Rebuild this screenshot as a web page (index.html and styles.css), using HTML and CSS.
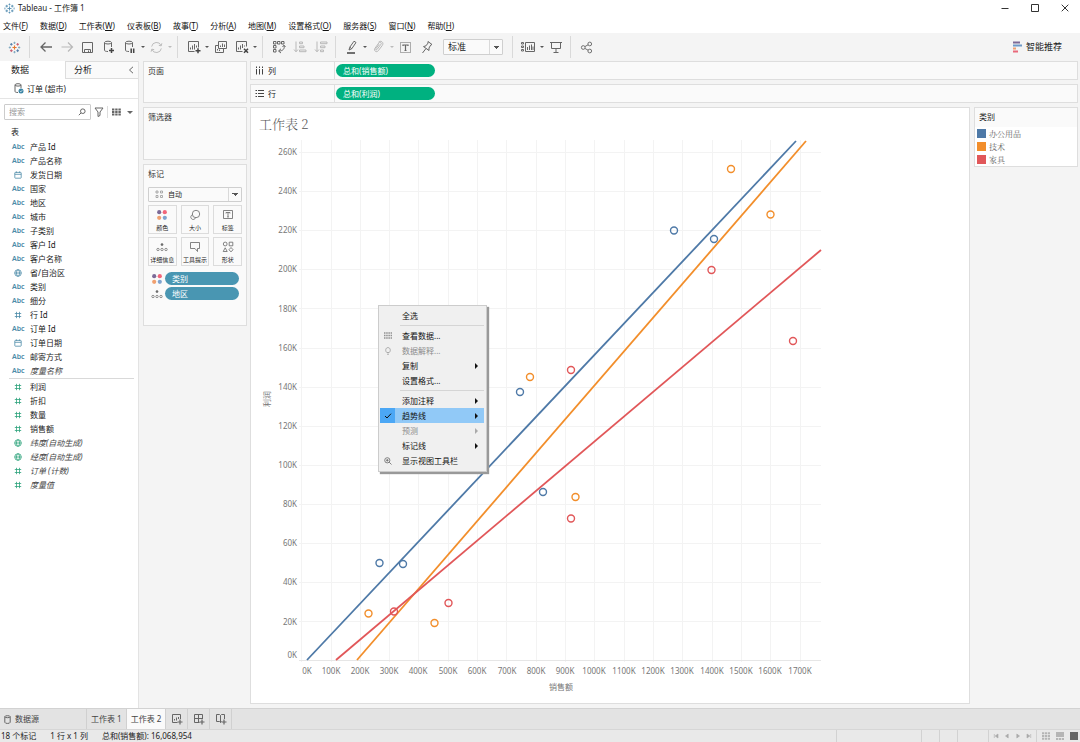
FILE: index.html
```html
<!DOCTYPE html>
<html lang="zh-CN">
<head>
<meta charset="utf-8">
<title>Tableau - 工作簿 1</title>
<link rel="stylesheet" href="styles.css">
</head>
<body>
<svg class="defs" aria-hidden="true">
  <defs>
    <symbol id="i-hash" viewBox="0 0 8 8"><path d="M2.500 .8v6.400M5.500 .8v6.400M.8 2.500h6.400M.8 5.500h6.400"/></symbol>
    <symbol id="i-globe" viewBox="0 0 8 8"><circle cx="4" cy="4" r="3.3"/><ellipse cx="4" cy="4" rx="1.5" ry="3.3"/><path d="M.7 4h6.6"/></symbol>
    <symbol id="i-date" viewBox="0 0 8 8"><rect x=".8" y="1.4" width="6.4" height="5.8" rx=".6"/><path d="M.8 3.3h6.4M2.4.4v1.4M5.6.4v1.4"/></symbol>
    <symbol id="i-colors" viewBox="0 0 12 12"><circle cx="3.2" cy="3.2" r="2.1" fill="#7c6a97"/><circle cx="8.8" cy="3.2" r="2.1" fill="#f2667a"/><circle cx="3.2" cy="8.8" r="2.1" fill="#f0a070"/><circle cx="8.8" cy="8.8" r="2.1" fill="#7fa3cf"/></symbol>
    <symbol id="i-detail" viewBox="0 0 12 12"><circle cx="6" cy="3.6" r="1" fill="#666"/><circle cx="2" cy="8.500" r="1.200"/><circle cx="6" cy="8.500" r="1.200"/><circle cx="10" cy="8.500" r="1.200"/></symbol>
    <symbol id="i-logo" viewBox="0 0 14 14"><path class="c-orange" d="M7 4.8v4.4M4.8 7h4.4"/><path class="c-red" d="M3.6 8.9v3M2.1 10.4h3M10.4 2.2v2.8M9 3.6h2.8"/><path class="c-blue" d="M10.4 8.9v3M9 10.4h2.8M3.6 2.2v2.8M2.2 3.6H5"/><path class="c-sky" d="M7 .8v2.4M5.8 2h2.4M7 10.8v2.4M5.8 12h2.4M2 5.8v2.4M.8 7h2.4M12 5.8v2.4M10.8 7h2.4"/></symbol>
    <symbol id="i-logo-small" viewBox="0 0 12 12"><path d="M6 3.8v4.4M3.8 6h4.4M3 7.2V10M1.6 8.6h2.8M9 2v2.8M7.6 3.4h2.8M9 7.2V10M7.6 8.6h2.8M3 2v2.8M1.6 3.4h2.8M6 .6v2M5 1.6h2M6 9.4v2M5 10.4h2M1 5v2M11 5v2"/></symbol>
  </defs>
</svg>

<div class="app">
  <header class="titlebar">
    <svg class="titlebar__logo" width="11" height="11"><use href="#i-logo-small"/></svg>
    <span class="titlebar__text">Tableau - 工作簿 1</span>
    <div class="window-buttons">
      <button aria-label="最小化"><svg width="8" height="8" viewBox="0 0 8 8"><path d="M.5 4.5h7"/></svg></button>
      <button aria-label="最大化"><svg width="8" height="8" viewBox="0 0 8 8"><path d="M.5.5h7v7h-7z"/></svg></button>
      <button aria-label="关闭"><svg width="8" height="8" viewBox="0 0 8 8"><path d="M.7.7l6.600 6.600M7.300.7L.7 7.300"/></svg></button>
    </div>
  </header>

  <nav class="menubar">
    <button>文件(<u>F</u>)</button><button>数据(<u>D</u>)</button><button>工作表(<u>W</u>)</button><button>仪表板(<u>B</u>)</button><button>故事(<u>T</u>)</button><button>分析(<u>A</u>)</button><button>地图(<u>M</u>)</button><button>设置格式(<u>O</u>)</button><button>服务器(<u>S</u>)</button><button>窗口(<u>N</u>)</button><button>帮助(<u>H</u>)</button>
  </nav>

  <div class="toolbar">
    <button class="tool" aria-label="起始页"><svg width="13" height="13"><use href="#i-logo"/></svg></button>
    <span class="toolbar__sep"></span>
    <button class="tool" aria-label="撤销"><svg width="14" height="14" viewBox="0 0 14 14"><path d="M13 7H2M6.5 2.5L2 7l4.500 4.500" stroke-width="1.300"/></svg></button>
    <button class="tool tool--off" aria-label="重做"><svg width="14" height="14" viewBox="0 0 14 14"><path d="M1.500 7h11M8 2.500L12.500 7 8 11.500" stroke-width="1.200"/></svg></button>
    <button class="tool" aria-label="保存"><svg width="13" height="13" viewBox="0 0 13 13"><path d="M1.500 1.500h10v10h-10zM3.500 11.500v-3h6v3M7.500 9.500v1.500"/></svg></button>
    <button class="tool" aria-label="新建数据源"><svg width="14" height="14" viewBox="0 0 14 14"><path d="M6 11.500c-2.200 0-3.500-.5-3.500-1.200V2.800M9.500 2.800V7"/><ellipse cx="6" cy="2.600" rx="3.500" ry="1.400"/><path class="strong" d="M9.500 8v5M7 10.500h5"/></svg></button>
    <button class="tool" aria-label="暂停自动更新"><svg width="14" height="14" viewBox="0 0 14 14"><path d="M6 11.500c-2.200 0-3.500-.5-3.500-1.200V2.800M9.500 2.800V7"/><ellipse cx="6" cy="2.600" rx="3.500" ry="1.400"/><path class="strong" d="M8.200 8.500v4.500M10.700 8.500v4.500"/></svg></button>
    <button class="caret" aria-label="更新选项"></button>
    <button class="tool tool--off" aria-label="运行更新"><svg width="13" height="13" viewBox="0 0 14 14"><path d="M1.800 6A5.300 5.300 0 0 1 12 5M12.200 8A5.300 5.300 0 0 1 2 9M12.800 2.500L12 5.200 9.500 4.700M1.200 11.500L2 8.800l2.500.5"/></svg></button>
    <button class="caret caret--off" aria-label="运行选项"></button>
    <span class="toolbar__sep"></span>
    <button class="tool" aria-label="新建工作表"><svg width="14" height="14" viewBox="0 0 14 14"><path d="M7.500 11.500H1.500v-10h10v6M3.500 9.500V7.500M5.500 9.500V5.500M7.500 9.500V4M9.500 7.500V5.500"/><path class="strong" d="M11 8.200v5M8.500 10.700h5"/></svg></button>
    <button class="caret" aria-label="新建选项"></button>
    <button class="tool" aria-label="复制工作表"><svg width="14" height="14" viewBox="0 0 14 14"><path d="M4.500 1.500h8v7h-8zM4.500 5.500h-3v7h8v-4M6.500 7V5.500M8.500 7V3.500M10.500 7V4.500M3.500 10.500V9M5.500 11v-1.500"/></svg></button>
    <button class="tool" aria-label="清除工作表"><svg width="14" height="14" viewBox="0 0 14 14"><path d="M7.500 11.500H1.500v-10h10v5M3.500 9.500V7.500M5.500 9.500V5.500M7.500 8V4M9.500 6.500V5.500"/><path class="strong" d="M9 8.700l4 4M13 8.700l-4 4"/></svg></button>
    <button class="caret" aria-label="清除选项"></button>
    <span class="toolbar__sep"></span>
    <button class="tool" aria-label="交换行和列"><svg width="14" height="14" viewBox="0 0 14 14"><path d="M1.500 1.500H4V4H1.500zM5.500 1.500H8V4H5.500zM9.500 1.500H12V4H9.500zM1.500 5.500H4V8H1.500zM1.500 9.500H4V12H1.500zM12 5.500c1 3-1 5.500-5 5.500M9 8.800L6.500 11 9 13M10.500 7L12 5.200 13.500 7"/></svg></button>
    <button class="tool tool--off" aria-label="升序排序"><svg width="14" height="14" viewBox="0 0 14 14"><path d="M3 1.500v10M1 9.500l2 2.300 2-2.300M6.500 2h3v1.700h-3zM6.500 6h4.500v1.700H6.500zM6.500 10h6.500v1.700H6.500z"/></svg></button>
    <button class="tool tool--off" aria-label="降序排序"><svg width="14" height="14" viewBox="0 0 14 14"><path d="M3 1.500v10M1 9.500l2 2.300 2-2.300M6.500 2H13v1.700H6.500zM6.500 6H11v1.700H6.500zM6.500 10h3v1.700h-3z"/></svg></button>
    <span class="toolbar__sep"></span>
    <button class="tool" aria-label="突出显示"><svg width="14" height="14" viewBox="0 0 14 14"><path d="M4 10l.8-2.800L9 1.200l2 1.300-4.200 6.200zM4.800 7.200l2 1.500"/><path class="strong" d="M2 13h8"/></svg></button>
    <button class="caret" aria-label="突出显示选项"></button>
    <button class="tool tool--off" aria-label="组成员"><svg width="14" height="14" viewBox="0 0 14 14"><path d="M5 9.500l4-5.300c1-1.300-1-2.800-2-1.500L3 8.200c-1.700 2.500 1.500 4.800 3.300 2.500l4-5.300c2-3-1.500-5.500-3.800-3.200M5 9.500C4.200 10.300 3.200 9.500 3.900 8.600l3.300-4.400"/></svg></button>
    <button class="caret caret--off" aria-label="组选项"></button>
    <button class="tool" aria-label="显示标记标签"><svg width="13" height="13" viewBox="0 0 13 13"><path d="M1.500 1.500h10v10h-10z" stroke-dasharray="1 1"/><path d="M4 5V4h5v1M6.500 4v5.500M5.500 9.500h2" stroke-width="1.200"/></svg></button>
    <button class="tool" aria-label="固定轴"><svg width="14" height="14" viewBox="0 0 14 14"><path d="M8 1.500l4 3-1.300.6L9 8v2.500L3.500 6.600 6 5.800l2-2.700zM6 8.500L2.500 13"/></svg></button>
    <select class="fit-select" aria-label="适合方式"><option>标准</option></select>
    <span class="toolbar__sep"></span>
    <button class="tool" aria-label="显示卡"><svg width="15" height="14" viewBox="0 0 15 14"><path d="M.5 2.500h2v1.500h-2zM.5 6h2v1.500h-2zM.5 9.500h2V11h-2zM4.500 2.500h9v9h-9zM6.500 10V7M8.500 10V5.500M10.500 10V4.500M12 10V6.500"/></svg></button>
    <button class="caret" aria-label="显示卡选项"></button>
    <button class="tool" aria-label="演示模式"><svg width="14" height="14" viewBox="0 0 14 14"><path d="M1 2.500h12M2.500 2.500v6h9v-6M7 8.500V12M4.500 12.500h5"/></svg></button>
    <span class="toolbar__sep"></span>
    <button class="tool" aria-label="共享"><svg width="13" height="13" viewBox="0 0 14 14"><circle cx="3.500" cy="7" r="2"/><circle cx="10.500" cy="3.200" r="2"/><circle cx="10.500" cy="10.800" r="2"/><path d="M5.300 6l3.400-1.900M5.300 8l3.400 1.900"/></svg></button>
    <button class="showme"><svg width="10" height="12" viewBox="0 0 10 12"><path d="M1 1.500h7" stroke="#7c6a97"/><path d="M1 4.500h9" stroke="#6f9ac8"/><path d="M1 7.500h3" stroke="#f0a070"/><path d="M1 10.500h5" stroke="#e9687a"/></svg>智能推荐</button>
  </div>

  <div class="workspace">
    <aside class="data-pane">
      <div class="pane-tabs">
        <button class="pane-tab pane-tab--active">数据</button>
        <button class="pane-tab">分析<svg width="6" height="8" viewBox="0 0 6 8"><path d="M5 .8L1.500 4 5 7.200"/></svg></button>
      </div>
      <div class="source">
        <svg width="10" height="11" viewBox="0 0 10 11"><path d="M4 9.500c-2 0-3-.4-3-1.100V2M7 2v3"/><ellipse cx="4" cy="1.900" rx="3" ry="1.200"/><circle cx="7" cy="8" r="2.500" fill="#3b85a5" stroke="none"/><path d="M5.900 8l.9.900 1.500-1.700" stroke="#fff" stroke-width=".7"/></svg>
        订单 (超市)
      </div>
      <div class="search-row">
        <label class="search">
          <input type="search" placeholder="搜索" aria-label="搜索">
          <svg width="8" height="8" viewBox="0 0 8 8"><circle cx="4.800" cy="3.200" r="2.300"/><path d="M3 5L.8 7.200"/></svg>
        </label>
        <button aria-label="筛选"><svg width="10" height="10" viewBox="0 0 10 10"><path d="M1 1h8L6 5v3.500L4 9.500V5z"/></svg></button>
        <button class="view-as" aria-label="查看方式"><svg width="9" height="8" viewBox="0 0 9 8"><path d="M0 1.500h9M0 4h9M0 6.500h9" stroke-width="1.800" stroke-dasharray="2.400 .8"/></svg><i class="tri"></i></button>
      </div>
      <h2 class="fields-title">表</h2>
      <ul class="fields fields--dim">
        <li><b>Abc</b>产品 Id</li>
        <li><b>Abc</b>产品名称</li>
        <li><svg><use href="#i-date"/></svg>发货日期</li>
        <li><b>Abc</b>国家</li>
        <li><b>Abc</b>地区</li>
        <li><b>Abc</b>城市</li>
        <li><b>Abc</b>子类别</li>
        <li><b>Abc</b>客户 Id</li>
        <li><b>Abc</b>客户名称</li>
        <li><svg><use href="#i-globe"/></svg>省/自治区</li>
        <li><b>Abc</b>类别</li>
        <li><b>Abc</b>细分</li>
        <li><svg><use href="#i-hash"/></svg>行 Id</li>
        <li><b>Abc</b>订单 Id</li>
        <li><svg><use href="#i-date"/></svg>订单日期</li>
        <li><b>Abc</b>邮寄方式</li>
        <li><b>Abc</b><em>度量名称</em></li>
      </ul>
      <ul class="fields fields--measure">
        <li><svg><use href="#i-hash"/></svg>利润</li>
        <li><svg><use href="#i-hash"/></svg>折扣</li>
        <li><svg><use href="#i-hash"/></svg>数量</li>
        <li><svg><use href="#i-hash"/></svg>销售额</li>
        <li><svg><use href="#i-globe"/></svg><em>纬度(自动生成)</em></li>
        <li><svg><use href="#i-globe"/></svg><em>经度(自动生成)</em></li>
        <li><svg><use href="#i-hash"/></svg><em>订单 (计数)</em></li>
        <li><svg><use href="#i-hash"/></svg><em>度量值</em></li>
      </ul>
    </aside>

    <div class="cards">
      <section class="card card--pages"><h3>页面</h3></section>
      <section class="card card--filters"><h3>筛选器</h3></section>
      <section class="card card--marks">
        <h3>标记</h3>
        <div class="mark-type">
          <svg width="9" height="9" viewBox="0 0 9 9"><path d="M1 1h2v2H1zM5.500 1h2v2h-2zM1 5.500h2v2H1zM5.500 5.500h2v2h-2z" stroke-width=".8"/></svg>
          <select aria-label="标记类型"><option>自动</option></select>
        </div>
        <div class="mark-grid">
          <button><svg><use href="#i-colors"/></svg>颜色</button>
          <button><svg viewBox="0 0 12 12"><circle cx="7" cy="5" r="3.700"/><path d="M3.400 5.800a2.400 2.400 0 1 0 3.100 3"/></svg>大小</button>
          <button><svg viewBox="0 0 12 12"><path d="M1.500 1.500h9v8h-9zM4 4.500V3.500h4v1M6 3.500V8M5.200 8h1.600"/></svg>标签</button>
          <button><svg><use href="#i-detail"/></svg>详细信息</button>
          <button><svg viewBox="0 0 12 12"><path d="M1.500 1.500h9v6H8.500v3L6 7.500H1.500z"/></svg>工具提示</button>
          <button><svg viewBox="0 0 12 12"><circle cx="3.200" cy="3" r="1.900"/><path d="M7.200 1.200h3.600v3.600H7.200zM3.200 6.800l2 3.700h-4zM9 6.500l2 2.200-2 2.200-2-2.200z"/></svg>形状</button>
        </div>
        <div class="mark-row"><svg><use href="#i-colors"/></svg><button class="pill pill--blue">类别</button></div>
        <div class="mark-row"><svg><use href="#i-detail"/></svg><button class="pill pill--blue">地区</button></div>
      </section>
    </div>

    <main class="canvas">
      <div class="shelf">
        <div class="shelf__name"><svg width="9" height="9" viewBox="0 0 9 9"><path d="M1.500 3v5.500M4.500 3v5.500M7.500 3v5.500M1.500.5v1.500M4.500.5v1.500M7.500.5v1.500"/></svg>列</div>
        <button class="pill pill--green">总和(销售额)</button>
      </div>
      <div class="shelf">
        <div class="shelf__name"><svg width="9" height="9" viewBox="0 0 9 9"><path d="M3 1.500h6M3 4.500h6M3 7.500h6M.5 1.500H2M.5 4.500H2M.5 7.500H2"/></svg>行</div>
        <button class="pill pill--green">总和(利润)</button>
      </div>
      <div class="view-row">
        <section class="sheet">
          <h1>工作表 2</h1>
          <svg class="chart" viewBox="251 137 718 560" role="img" aria-label="销售额与利润散点图">
            <path class="grid" d="M301.500 140v522M331.500 140v522M360.500 140v522M389.500 140v522M418.500 140v522M448.500 140v522M477.500 140v522M506.500 140v522M536.500 140v522M565.500 140v522M594.500 140v522M624.500 140v522M653.500 140v522M682.500 140v522M712.500 140v522M741.500 140v522M770.500 140v522M800.500 140v522"/>
            <path class="grid" d="M299 152.500h522M299 191.500h522M299 230.500h522M299 269.500h522M299 308.500h522M299 348.500h522M299 387.500h522M299 426.500h522M299 465.500h522M299 504.500h522M299 543.500h522M299 582.500h522M299 621.500h522"/>
            <path class="axis" d="M299 660.500h522"/>
            <g class="ticks ticks--y">
              <text x="297" y="155">260K</text><text x="297" y="194">240K</text><text x="297" y="233">220K</text><text x="297" y="272">200K</text><text x="297" y="312">180K</text><text x="297" y="351">160K</text><text x="297" y="390">140K</text><text x="297" y="429">120K</text><text x="297" y="468">100K</text><text x="297" y="507">80K</text><text x="297" y="546">60K</text><text x="297" y="585">40K</text><text x="297" y="625">20K</text><text x="297" y="658">0K</text>
            </g>
            <g class="ticks ticks--x">
              <text x="307" y="674">0K</text><text x="331" y="674">100K</text><text x="360" y="674">200K</text><text x="389" y="674">300K</text><text x="418" y="674">400K</text><text x="448" y="674">500K</text><text x="477" y="674">600K</text><text x="507" y="674">700K</text><text x="536" y="674">800K</text><text x="565" y="674">900K</text><text x="594" y="674">1000K</text><text x="624" y="674">1100K</text><text x="653" y="674">1200K</text><text x="682" y="674">1300K</text><text x="712" y="674">1400K</text><text x="741" y="674">1500K</text><text x="770" y="674">1600K</text><text x="800" y="674">1700K</text>
              <text x="561" y="690">销售额</text>
              <text transform="translate(270 399) rotate(-90)">利润</text>
            </g>
            <g class="series series--blue">
              <path d="M307 660L796 141"/>
              <circle cx="674" cy="230.500" r="3.500"/><circle cx="714" cy="239" r="3.500"/><circle cx="520" cy="392" r="3.500"/><circle cx="543" cy="492" r="3.500"/><circle cx="379.500" cy="563" r="3.500"/><circle cx="403" cy="564" r="3.500"/>
            </g>
            <g class="series series--orange">
              <path d="M357 660L806 141"/>
              <circle cx="731" cy="169" r="3.500"/><circle cx="770.500" cy="214.500" r="3.500"/><circle cx="530" cy="377" r="3.500"/><circle cx="575.500" cy="497" r="3.500"/><circle cx="368.500" cy="613.500" r="3.500"/><circle cx="434.500" cy="623" r="3.500"/>
            </g>
            <g class="series series--red">
              <path d="M336 660L821 250"/>
              <circle cx="711.500" cy="270" r="3.500"/><circle cx="793" cy="341" r="3.500"/><circle cx="571" cy="370" r="3.500"/><circle cx="571" cy="518.500" r="3.500"/><circle cx="448.500" cy="603" r="3.500"/><circle cx="394" cy="611.500" r="3.500"/>
            </g>
          </svg>
          <div class="context-menu" role="menu">
            <button role="menuitem">全选</button>
            <hr>
            <button role="menuitem"><svg viewBox="0 0 8 8"><path d="M0 1h8M0 3.500h8M0 6h8" stroke-width="1.500" stroke-dasharray="1.500 .7" opacity=".7"/></svg>查看数据...</button>
            <button role="menuitem" disabled><svg viewBox="0 0 8 8"><path d="M2.800 5.500C1 4 1.500.6 4 .6S7 4 5.200 5.500zM3 7.200h2"/></svg>数据解释...</button>
            <button role="menuitem" class="has-sub">复制</button>
            <button role="menuitem">设置格式...</button>
            <hr>
            <button role="menuitem" class="has-sub">添加注释</button>
            <button role="menuitem" class="has-sub is-active"><svg viewBox="0 0 8 8"><path d="M1 4l2 2 4-4.300"/></svg>趋势线</button>
            <button role="menuitem" class="has-sub" disabled>预测</button>
            <button role="menuitem" class="has-sub">标记线</button>
            <button role="menuitem"><svg viewBox="0 0 8 8"><circle cx="3.300" cy="3.300" r="2.600"/><path d="M5.200 5.200l2.300 2.300M2 3.300h2.600M3.300 2v2.600"/></svg>显示视图工具栏</button>
          </div>
        </section>
        <aside class="legend">
          <h3>类别</h3>
          <ul>
            <li><i class="swatch swatch--blue"></i>办公用品</li>
            <li><i class="swatch swatch--orange"></i>技术</li>
            <li><i class="swatch swatch--red"></i>家具</li>
          </ul>
        </aside>
      </div>
    </main>
  </div>

  <nav class="sheet-tabs">
    <button class="sheet-tab sheet-tab--source"><svg width="7" height="9" viewBox="0 0 7 9"><path d="M.8 1.800v5.500c0 1.500 5.400 1.500 5.400 0V1.800"/><ellipse cx="3.500" cy="1.700" rx="2.700" ry="1"/></svg>数据源</button>
    <button class="sheet-tab">工作表 1</button>
    <button class="sheet-tab sheet-tab--active">工作表 2</button>
    <button class="sheet-tab sheet-tab--new" aria-label="新建工作表"><svg width="12" height="12" viewBox="0 0 12 12"><path d="M6.500 9.500h-5v-8h8V6M3.500 7.500V6M5.500 7.500V4.500M7.500 6V4"/><path class="strong" d="M9 6.500v5M6.500 9h5"/></svg></button>
    <button class="sheet-tab sheet-tab--new" aria-label="新建仪表板"><svg width="12" height="12" viewBox="0 0 12 12"><path d="M6.500 9.500h-5v-8h8V6M5.500 1.500v8M1.500 5.500h8"/><path class="strong" d="M9 6.500v5M6.500 9h5"/></svg></button>
    <button class="sheet-tab sheet-tab--new" aria-label="新建故事"><svg width="12" height="12" viewBox="0 0 12 12"><path d="M6.500 8.500L5.500 9.500 4.500 8.500h-3v-7h3l1 1 1-1h3V6M5.500 2.500v7"/><path class="strong" d="M9 6.500v5M6.500 9h5"/></svg></button>
  </nav>

  <footer class="statusbar">
    <span>18 个标记</span><span>1 行 x 1 列</span><span>总和(销售额): 16,068,954</span>
    <div class="status-cells">
      <i class="cell cell--wide"></i><i class="cell"></i><i class="cell"></i><i class="cell cell--mid"></i>
      <div class="pager">
        <button aria-label="第一个"><svg viewBox="0 0 6 6"><path d="M1.300 1v4M5 1v4L2.200 3z"/></svg></button>
        <button aria-label="上一个"><svg viewBox="0 0 6 6"><path d="M4.200 1v4L1.500 3z"/></svg></button>
        <button aria-label="下一个"><svg viewBox="0 0 6 6"><path d="M1.800 1v4l2.700-2z"/></svg></button>
        <button aria-label="最后一个"><svg viewBox="0 0 6 6"><path d="M4.700 1v4M1 1v4l2.800-2z"/></svg></button>
      </div>
      <div class="views">
        <button aria-label="缩略图"><svg viewBox="0 0 8 8"><path d="M0 1.200h8M0 4h8M0 6.800h8" stroke="#b5b5b5" stroke-width="2" stroke-dasharray="2.200 .7"/></svg></button>
        <button aria-label="胶片"><svg viewBox="0 0 8 8"><path d="M0 2.500h8" stroke="#b5b5b5" stroke-width="5"/><path d="M0 7h8" stroke="#b5b5b5" stroke-width="2" stroke-dasharray="2.200 .7"/></svg></button>
        <button aria-label="单个工作表"><svg viewBox="0 0 8 8"><path d="M0 4h8" stroke="#666" stroke-width="8"/></svg></button>
      </div>
    </div>
  </footer>
</div>
</body>
</html>
```
FILE: styles.css
```css
* { box-sizing: border-box; }

body {
  margin: 0;
  font: 8px/12px "Noto Sans", "Noto Sans CJK SC", sans-serif;
  color: #222;
  background: #f4f4f4;
}

h1, h2, h3, ul { margin: 0; padding: 0; font-weight: 400; }
ul { list-style: none; }
button, input, select { font: inherit; color: inherit; }
button { margin: 0; padding: 0; border: 0; background: none; }
svg { display: block; flex: none; fill: none; stroke: #666; stroke-width: 1; }

.defs { position: absolute; width: 0; height: 0; }
.app { min-height: 100vh; display: flex; flex-direction: column; }
.strong { stroke: #444; stroke-width: 1.5; }
.c-orange { stroke: #e8762c; stroke-width: 1.2; }
.c-red { stroke: #c9586b; }
.c-blue { stroke: #4e79a7; }
.c-sky { stroke: #7fa9c0; }
#i-colors circle { stroke: none; }
#i-detail circle { stroke-width: .7; }
#i-logo-small { stroke: #5b93b5; }

/* Title bar and menus */
.titlebar { display: flex; align-items: center; height: 16px; padding-left: 4px; background: #fff; }
.titlebar__text { margin-left: 3px; }
.window-buttons { margin-left: auto; display: flex; }
.window-buttons button { width: 30px; height: 16px; display: grid; place-items: center; }
.window-buttons svg { stroke: #333; }
.menubar { display: flex; gap: 12px; height: 17px; padding: 4px 3px 0; background: #fff; }
.menubar button { height: 12px; line-height: 12px; color: #111; }

/* Toolbar */
.toolbar { display: flex; align-items: center; height: 28px; padding: 0 18px 0 4px; }
.toolbar__sep { width: 1px; height: 22px; margin: 0 5px 0 4px; background: #d9d9d9; }
.tool { width: 21px; height: 22px; display: grid; place-items: center; }
.tool--off svg { stroke: #b8b8b8; }
.caret { width: 6px; height: 22px; display: grid; place-items: center; }
.caret::before { content: ""; border: 2px solid transparent; border-top-color: #555; border-bottom: 0; }
.caret--off::before { border-top-color: #bbb; }
select {
  appearance: none;
  border: 1px solid #cfcfcf;
  border-radius: 1px;
  background:
    linear-gradient(to bottom left, #555 50%, transparent 50%) right 6px center / 3px 3px no-repeat,
    linear-gradient(to bottom right, #555 50%, transparent 50%) right 3px center / 3px 3px no-repeat,
    linear-gradient(#d9d9d9, #d9d9d9) right 12px center / 1px 100% no-repeat,
    #fafafa;
}
.fit-select { width: 60px; height: 16px; margin: 0 5px 0 6px; padding: 0 4px; font-size: 9px; line-height: 12px; }
.showme { display: flex; align-items: center; gap: 4px; margin-left: auto; font-size: 9px; }
.showme svg { stroke-width: 2; }

/* Workspace */
.workspace { flex: 1; display: flex; }
.data-pane { width: 139px; background: #fff; border-right: 1px solid #e3e3e3; }
.pane-tabs { display: flex; font-size: 9px; }
.pane-tab { flex: 1; height: 18px; padding: 0 4px 0 8px; display: flex; align-items: center; justify-content: space-between; border: solid #ddd; border-width: 1px 0 1px 1px; background: #fafafa; }
.pane-tab--active { flex: 0 0 65px; padding-left: 10px; border-color: #fff; background: #fff; }
.source { display: flex; align-items: center; gap: 3px; height: 20px; padding-left: 14px; border-bottom: 1px solid #e5e5e5; }
.search-row { display: flex; align-items: center; gap: 3px; padding: 5px 8px 0 4px; }
.search { width: 87px; height: 16px; padding: 0 4px; display: flex; align-items: center; border: 1px solid #ccc; border-radius: 1px; }
.search input { flex: 1; min-width: 0; padding: 0; border: 0; outline: 0; background: none; }
.search input::placeholder { color: #999; }
.view-as { display: flex; align-items: center; gap: 6px; height: 12px; padding-left: 4px; border-left: 1px solid #ddd; }
.tri { border: 3px solid transparent; border-top-color: #666; border-bottom: 0; }
.fields-title { padding: 6px 0 2px 11px; font-size: 8px; line-height: 12px; }
.fields li { display: flex; align-items: center; height: 14px; padding-left: 12px; }
.fields b { width: 18px; font-size: 7px; font-weight: 600; color: #4c8ba8; }
.fields svg { width: 8px; height: 8px; margin: 0 8px 0 2px; stroke: #4c8ba8; stroke-width: .8; }
.fields em { color: #444; }
.fields--dim { margin-right: 4px; }
.fields--dim::after { content: ""; display: block; margin-left: 9px; border-top: 1px solid #d9d9d9; }
.fields--measure { padding-top: 1px; }
.fields--measure svg { stroke: #2fa37c; }

.cards { width: 111px; padding: 0 3px 0 4px; display: flex; flex-direction: column; gap: 4px; }
.card { padding: 3px 4px 4px; border: 1px solid #dedede; background: #fafafa; }
.card h3 { font-size: 8px; line-height: 12px; color: #333; }
.card--pages { height: 42px; }
.card--filters { height: 53px; }
.card--marks { min-height: 162px; }
.mark-type { position: relative; margin-top: 7px; }
.mark-type svg { position: absolute; left: 7px; top: 3px; stroke: #999; }
.mark-type select { width: 100%; height: 15px; padding: 0 19px; font-size: 7px; line-height: 12px; display: block; }
.mark-grid { display: grid; grid-template-columns: repeat(3, 1fr); gap: 3px 4px; margin: 3px 0 6px; }
.mark-grid button { height: 29px; padding-top: 3px; display: flex; flex-direction: column; align-items: center; gap: 3px; border: 1px solid #dcdcdc; font-size: 6px; line-height: 8px; white-space: nowrap; }
.mark-grid svg, .mark-row svg { width: 12px; height: 12px; stroke-width: .8; }
.mark-row { display: flex; align-items: center; gap: 2px; height: 13px; margin: 0 3px 2px; }
.pill { height: 13px; padding: 0 7px; border-radius: 7px; line-height: 12px; text-align: left; color: #fff; }
.pill--blue { flex: 1; background: #4996b2; }
.pill--green { width: 99px; background: #00b180; }

.canvas { flex: 1; min-width: 0; display: flex; flex-direction: column; gap: 4px; padding: 0 2px 4px 0; }
.shelf { display: flex; align-items: center; height: 19px; border: 1px solid #dedede; background: #fafafa; }
.shelf__name { width: 84px; height: 100%; margin-right: 1px; padding-left: 4px; display: flex; align-items: center; gap: 4px; border-right: 1px solid #dedede; }
.shelf svg { stroke: #444; }
.view-row { flex: 1; display: flex; gap: 4px; align-items: flex-start; }
.sheet { position: relative; flex: 1; min-width: 0; align-self: stretch; border: 1px solid #dedede; background: #fff; }
.sheet h1 { padding: 6px 8px 3px; font: 300 13px/20px "Noto Serif CJK SC", "Noto Sans", "Noto Sans CJK SC", serif; color: #555; }
.chart { width: 100%; height: auto; }
.grid { stroke: #f3f3f3; }
.axis { stroke: #e6e6e6; }
.ticks { fill: #777; stroke: none; font-size: 8px; }
.ticks--y { text-anchor: end; }
.ticks--x { text-anchor: middle; }
.series { stroke-width: 1.4; }
.series path { stroke-width: 1.8; }
.series--blue { stroke: #4e79a7; }
.series--orange { stroke: #f28e2b; }
.series--red { stroke: #e15759; }

.legend { width: 104px; border: 1px solid #dedede; background: #fff; }
.legend h3 { padding: 3px 4px 4px; font-size: 8px; line-height: 12px; background: #fafafa; }
.legend li { display: flex; align-items: center; gap: 3px; height: 13px; padding-left: 2px; font-family: "Noto Serif CJK SC", "Noto Sans CJK SC", serif; color: #666; }
.swatch { width: 9px; height: 9px; }
.swatch--blue { background: #4e79a7; }
.swatch--orange { background: #f28e2b; }
.swatch--red { background: #e15759; }

/* Context menu over the chart */
.context-menu { position: absolute; left: 127px; top: 197px; width: 109px; padding: 2px 2px 3px 1px; border: 1px solid #ccc; background: #f0f0f0; box-shadow: 2px 2px 1px #999; color: #111; }
.context-menu button { position: relative; display: block; width: 100%; height: 15px; padding-left: 22px; line-height: 14px; text-align: left; }
.context-menu button:disabled { color: #8c8c8c; }
.context-menu svg { position: absolute; left: 4px; top: 4px; width: 8px; height: 8px; stroke-width: .8; }
.context-menu hr { height: 1px; margin: 2px 0 2px 20px; border: 0; background: #d5d5d5; }
.has-sub::after { content: ""; position: absolute; right: 6px; top: 5px; border: 3px solid transparent; border-left-color: #111; border-right: 0; }
.has-sub:disabled::after { border-left-color: #aaa; }
.is-active { background: linear-gradient(90deg, #4ba7f5 15px, #91c9f7 15px); }
.context-menu .is-active svg { stroke: #111; stroke-width: 1; }
.context-menu button:disabled svg { stroke: #999; }

/* Sheet tabs and status bar */
.sheet-tabs { display: flex; height: 21px; border-top: 1px solid #d2d2d2; background: #e3e3e3; }
.sheet-tab { display: flex; align-items: center; gap: 4px; padding: 0 4px; border-right: 1px solid #d0d0d0; color: #444; }
.sheet-tab--source { width: 87px; }
.sheet-tab--active { background: #fafafa; }
.sheet-tab--new { width: 22px; padding: 0 5px; }
.sheet-tab .strong { stroke-width: 1.2; stroke: #666; }
.statusbar { display: flex; align-items: center; gap: 14px; height: 13px; padding: 0 2px 0 1px; border-top: 1px solid #d6d6d6; background: #e9e9e9; }
.status-cells { display: flex; margin-left: auto; align-self: stretch; }
.cell { width: 18px; border-left: 1px solid #d2d2d2; }
.cell--wide { width: 85px; }
.cell--mid { width: 31px; }
.pager, .views { display: flex; align-items: center; border-left: 1px solid #d2d2d2; }
.pager { width: 48px; padding-left: 4px; gap: 5px; }
.pager svg { width: 6px; height: 6px; fill: #aaa; stroke: #aaa; stroke-width: .6; }
.views { width: 42px; padding-left: 5px; gap: 6px; }
.views svg { width: 8px; height: 8px; }
```
